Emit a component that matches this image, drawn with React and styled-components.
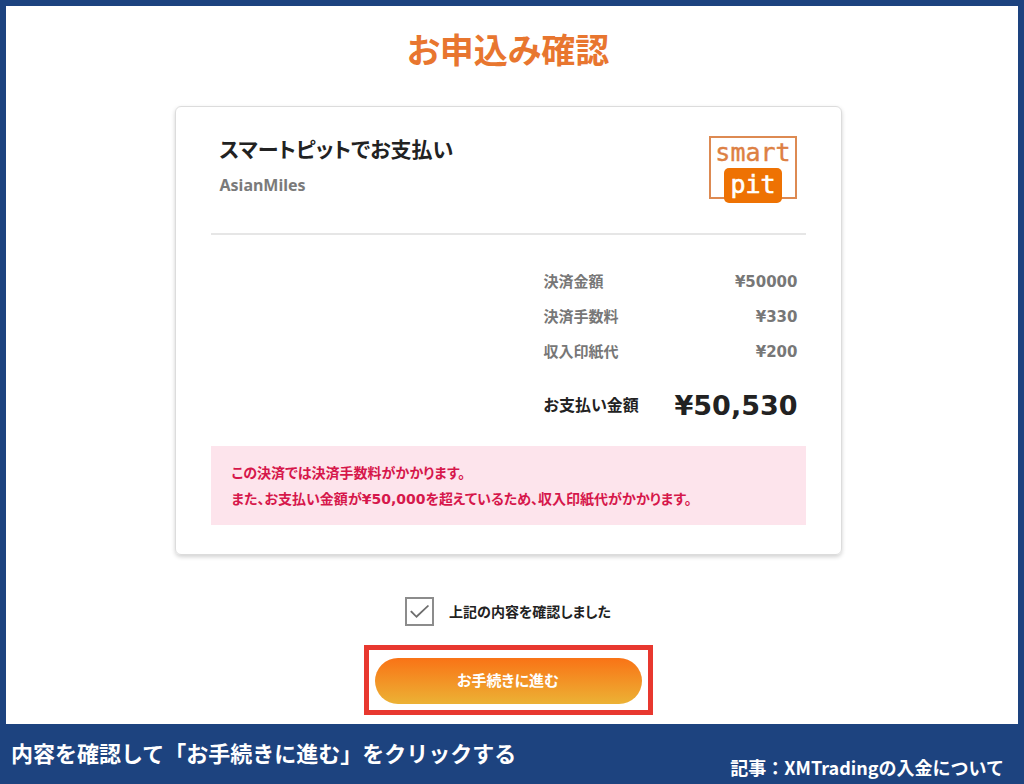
import React, { useState } from "react";
import styled, { createGlobalStyle } from "styled-components";

const GlobalStyle = createGlobalStyle`
  *, *::before, *::after { box-sizing: border-box; }
  body {
    margin: 0;
    background: #1d437f;
    color: #222;
    font-family: "DejaVu Sans", "Noto Sans CJK JP", sans-serif;
    font-weight: 700;
  }
`;

const Page = styled.div`
  display: flex;
  flex-direction: column;
  min-height: 100vh;
  padding: 6px 6px 0;
  background: #1d437f;
`;

const Main = styled.main`
  flex: 1;
  display: flex;
  flex-direction: column;
  align-items: center;
  padding: 20px 24px 8px 16px;
  background: #fff;
`;

const Title = styled.h1`
  margin: 0 0 30px;
  font-size: 34px;
  line-height: 50px;
  color: #e8762f;
  font-feature-settings: "palt";
`;

const Card = styled.section`
  width: 100%;
  max-width: 667px;
  padding: 24px 35px 29px;
  border: 1px solid #dcdcdc;
  border-radius: 6px;
  box-shadow: 0 2px 4px rgba(0, 0, 0, 0.18);
`;

const CardHeader = styled.header`
  display: flex;
  justify-content: space-between;
  align-items: flex-start;
  padding: 0 9px 30px;
  border-bottom: 2px solid #e6e6e6;
`;

const Method = styled.h2`
  margin: 0;
  font-size: 21px;
  line-height: 38px;
  font-feature-settings: "palt";
`;

const Merchant = styled.p`
  margin: 4px 0 0;
  font-family: "Noto Sans", sans-serif;
  font-size: 16px;
  line-height: 24px;
  color: #7a7a7a;
`;

const Logo = styled.svg`
  display: block;
  flex: none;
  margin-top: 4px;
`;

const Amounts = styled.dl`
  width: 254px;
  margin: 29px 8px 0 auto;
`;

const AmountRow = styled.div`
  display: flex;
  justify-content: space-between;
  align-items: center;
  height: ${(p) => (p.$total ? "46px" : "35px")};
  margin-top: ${(p) => (p.$total ? "14px" : "0")};
  color: ${(p) => (p.$total ? "#222" : "#777")};
`;

const AmountLabel = styled.dt`
  font-size: ${(p) => (p.$total ? "16px" : "15px")};
  line-height: 24px;
  font-feature-settings: "palt";
`;

const AmountValue = styled.dd`
  margin: 0;
  font-size: ${(p) => (p.$total ? "27px" : "15px")};
  line-height: 32px;
`;

const Notice = styled.div`
  margin-top: 17px;
  padding: 14px 21px 13px;
  background: #fde4ec;
  color: #d6174b;
  font-size: 14px;
  line-height: 26px;
  font-feature-settings: "palt";

  p { margin: 0; }
`;

const Confirm = styled.label`
  display: flex;
  align-items: center;
  gap: 15px;
  margin-top: 42px;
  font-size: 14px;
  line-height: 24px;
  font-feature-settings: "palt";
`;

const CheckBox = styled.input`
  appearance: none;
  width: 29px;
  height: 29px;
  margin: 0;
  border: 2px solid #8c8c8c;
  background: #fff;
  display: grid;
  place-items: center;

  &:checked::before {
    content: "";
    width: 19px;
    height: 13px;
    background: #6e6e6e;
    clip-path: polygon(0 52%, 8% 42%, 33% 80%, 93% 0, 100% 8%, 34% 100%);
  }
`;

const Highlight = styled.div`
  width: 100%;
  max-width: 289px;
  margin-top: 19px;
  padding: 8px 6px 6px;
  border: 5px solid #e8382f;
`;

const Proceed = styled.button`
  display: block;
  width: 100%;
  height: 46px;
  padding: 0 0 4px;
  border: 0;
  border-radius: 23px;
  background: linear-gradient(#f97316, #ecb235);
  color: #fff;
  font: inherit;
  font-size: 15px;
  font-feature-settings: "palt";
`;

const Caption = styled.footer`
  display: flex;
  justify-content: space-between;
  gap: 16px;
  height: 60px;
  padding: 0 14px 0 5px;
  color: #fff;
  font-family: "Noto Sans CJK JP", sans-serif;
`;

const Step = styled.p`
  margin: 10px 0 0;
  font-size: 22px;
  line-height: 36px;
`;

const Article = styled.p`
  margin: 30px 0 0;
  font-size: 18px;
  line-height: 26px;
`;

const amounts = [
  { label: "決済金額", value: "¥50000" },
  { label: "決済手数料", value: "¥330" },
  { label: "収入印紙代", value: "¥200" },
  { label: "お支払い金額", value: "¥50,530", total: true },
];

function SmartPitLogo() {
  return (
    <Logo width="88" height="68" viewBox="0 0 88 68" role="img" aria-label="smart pit">
      <rect x="1" y="2" width="86" height="61" fill="#fff" stroke="#dd8a52" strokeWidth="2" />
      <rect x="15" y="33" width="58" height="35" rx="5" fill="#ee7203" />
      <g fontFamily="'DejaVu Sans Mono', monospace" fontWeight="400" textAnchor="middle">
        <text x="44" y="26" fontSize="25" fill="#dd8043" stroke="#dd8043" strokeWidth="0.4">smart</text>
        <text x="44" y="58" fontSize="25" fill="#fff" stroke="#fff" strokeWidth="0.6">pit</text>
      </g>
    </Logo>
  );
}

export default function App() {
  const [confirmed, setConfirmed] = useState(true);

  return (
    <>
      <GlobalStyle />
      <Page>
        <Main>
          <Title>お申込み確認</Title>
          <Card>
            <CardHeader>
              <div>
                <Method>スマートピットでお支払い</Method>
                <Merchant>AsianMiles</Merchant>
              </div>
              <SmartPitLogo />
            </CardHeader>
            <Amounts>
              {amounts.map(({ label, value, total }) => (
                <AmountRow key={label} $total={total}>
                  <AmountLabel $total={total}>{label}</AmountLabel>
                  <AmountValue $total={total}>{value}</AmountValue>
                </AmountRow>
              ))}
            </Amounts>
            <Notice>
              <p>この決済では決済手数料がかかります。</p>
              <p>また、お支払い金額が¥50,000を超えているため、収入印紙代がかかります。</p>
            </Notice>
          </Card>
          <Confirm>
            <CheckBox
              type="checkbox"
              checked={confirmed}
              onChange={(e) => setConfirmed(e.target.checked)}
            />
            上記の内容を確認しました
          </Confirm>
          <Highlight>
            <Proceed type="button">お手続きに進む</Proceed>
          </Highlight>
        </Main>
        <Caption>
          <Step>内容を確認して「お手続きに進む」をクリックする</Step>
          <Article>記事：XMTradingの入金について</Article>
        </Caption>
      </Page>
    </>
  );
}
